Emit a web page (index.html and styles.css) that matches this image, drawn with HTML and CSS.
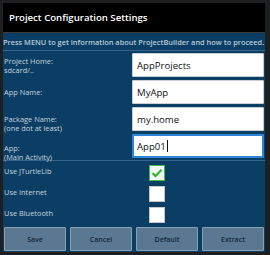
FILE: index.html
```html
<!DOCTYPE html>
<html>
<head>
	<meta http-equiv="Content-Type" content="text/html; charset=UTF-8"/>
	<title>Project Configuration Settings</title>
	<link rel="stylesheet" href="styles.css">
</head>
<body>

<div class="dialog">
	<div class="title">Project Configuration Settings</div>

	<div class="panel">
		<p class="info">Press MENU to get information about ProjectBuilder and how to proceed.</p>

		<div class="form">
			<label class="label row-1">Project Home:<br>sdcard/..</label>
			<div class="field">AppProjects</div>

			<label class="label row-2">App Name:</label>
			<div class="field">MyApp</div>

			<label class="label row-3">Package Name:<br>(one dot at least)</label>
			<div class="field">my.home</div>

			<label class="label row-4">App:<br>(Main Activity)</label>
			<div class="field field-focus">App01<span class="cursor"></span></div>
		</div>

		<div class="options">
			<span class="label">Use JTurtleLib</span>
			<span class="check checked">
				<svg width="12" height="10" viewBox="0 0 12 10"><path d="M1.5 5.2 L4.6 8 L10.5 1.8" fill="none" stroke="#2fb52f" stroke-width="2.2"/></svg>
			</span>

			<span class="label">Use Internet</span>
			<span class="check"></span>

			<span class="label">Use Bluetooth</span>
			<span class="check"></span>
		</div>

		<div class="buttons">
			<button>Save</button>
			<button>Cancel</button>
			<button>Default</button>
			<button>Extract</button>
		</div>
	</div>
</div>

</body>
</html>
```

FILE: styles.css
```css
html, body {
	margin: 0;
	padding: 0;
}

body {
	width: 270px;
	height: 255px;
	background: #1e1f21;
	font-family: 'Open Sans', 'DejaVu Sans', sans-serif;
	overflow: hidden;
}

.dialog {
	margin: 3px 5px 0 3px;
	display: flex;
	flex-direction: column;
}

/* title bar */
.title {
	height: 29px;
	display: flex;
	align-items: center;
	padding-left: 6px;
	background: #000;
	color: #fff;
	font-size: 9.6px;
	font-weight: 600;
	border-bottom: 1px solid #3a3a3a;
}

/* blue body */
.panel {
	background: #0b3e64;
	height: 219px;
	display: flex;
	flex-direction: column;
}

.info {
	margin: 0;
	height: 17px;
	display: flex;
	align-items: center;
	font-size: 7.4px;
	font-weight: 600;
	color: #b9cad8;
	white-space: nowrap;
	border-bottom: 1px solid #34648a;
}

.form {
	display: grid;
	grid-template-columns: 1fr 132px;
	grid-template-rows: repeat(4, 24px);
	row-gap: 3px;
	padding: 2px 1px 2px 0;
	border-bottom: 1px solid #34648a;
}

.label {
	font-size: 7.4px;
	line-height: 9px;
	color: #c6d3df;
	padding-left: 1px;
	white-space: nowrap;
}

.form .label {
	align-self: start;
}

.row-1 { margin-top: 4px; }
.row-2 { margin-top: 8px; }
.row-3 { margin-top: 8px; }
.row-4 { margin-top: 10px; }

.field {
	height: 24px;
	box-sizing: border-box;
	background: #fff;
	border: 1px solid #c9cfd4;
	border-radius: 1px;
	display: flex;
	align-items: center;
	padding-left: 4px;
	font-size: 9.6px;
	color: #111;
}

.field-focus {
	border: 2px solid #2f86d6;
	padding-left: 3px;
}

.cursor {
	display: inline-block;
	width: 1px;
	height: 12px;
	background: #111;
	margin-left: 1px;
}

/* checkboxes */
.options {
	display: grid;
	grid-template-columns: 1fr 132px;
	grid-auto-rows: 21px;
	padding: 1px 1px 0 0;
}

.options .label {
	align-self: center;
	margin-top: -3px;
}

.check {
	width: 16px;
	height: 16px;
	box-sizing: border-box;
	margin-left: 17px;
	align-self: center;
	background: #fff;
	border: 1px solid #c3c8cc;
	display: flex;
	align-items: center;
	justify-content: center;
}

.checked {
	border: 1px solid #47b847;
	background: #f4fbf4;
}

/* button bar */
.buttons {
	display: flex;
	gap: 4px;
	padding: 2px 1px 0 1px;
}

.buttons button {
	flex: 1;
	height: 24px;
	font-family: inherit;
	font-size: 7px;
	font-weight: 600;
	color: #12283b;
	background: #5a7891;
	border: 1px solid #8aa1b4;
	border-radius: 1px;
	padding: 0;
}
```
